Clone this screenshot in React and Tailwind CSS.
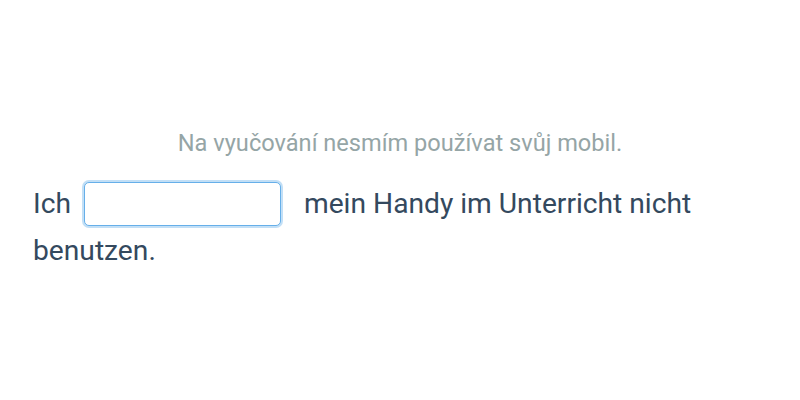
export default function App() {
  return (
    <div className="w-[800px] h-[400px] bg-white px-[33px] pt-[126px]" style={{ fontFamily: 'Roboto, "Noto Sans", sans-serif' }}>
      <p className="text-center text-[23.6px] leading-[34px] text-[#95a5a6]">
        Na vyučování nesmím používat svůj mobil.
      </p>
      <p className="mt-[21px] text-[28.2px] leading-[46px] text-[#34495e]">
        Ich{' '}
        <input
          type="text"
          className="relative -top-[2px] ml-[6px] mr-[16px] w-[197px] h-[44px] align-middle rounded-[5px] border border-[#66afe9] bg-white px-3 outline-none shadow-[0_0_0_2px_rgba(102,175,233,0.4)]"
        />{' '}
        mein Handy im Unterricht nicht benutzen.
      </p>
    </div>
  );
}
